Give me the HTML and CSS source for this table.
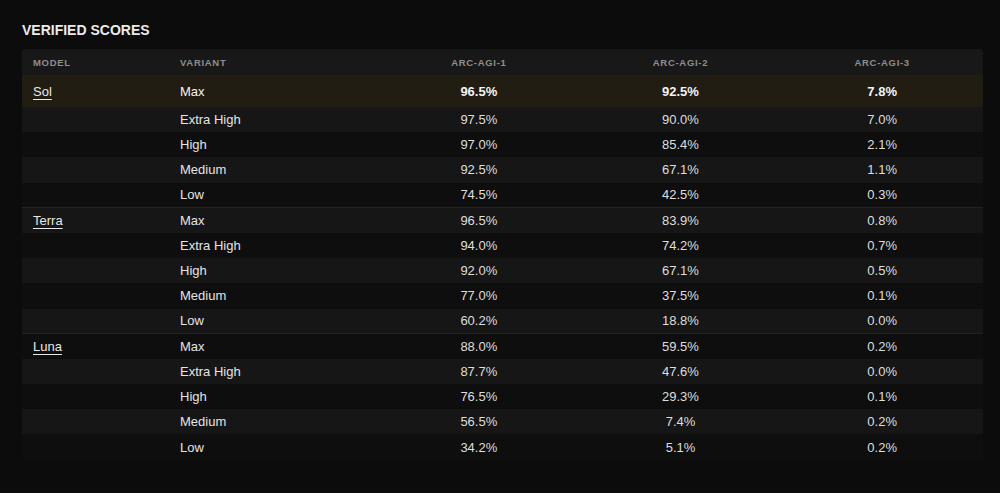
FILE: index.html
```html
<!DOCTYPE html>
<html lang="en">
<head>
<meta charset="utf-8">
<title>Verified Scores</title>
<link rel="stylesheet" href="styles.css">
</head>
<body>
<main class="page">
  <h2 class="title">VERIFIED SCORES</h2>
  <div class="table-wrap">
    <table class="scores">
      <colgroup>
        <col class="c-model"><col class="c-variant"><col class="c-num"><col class="c-num"><col class="c-num">
      </colgroup>
      <thead>
        <tr><th class="left">Model</th><th class="left">Variant</th><th>ARC-AGI-1</th><th>ARC-AGI-2</th><th>ARC-AGI-3</th></tr>
      </thead>
      <tbody>
        <tr class="best group-start"><td class="model"><a href="#">Sol</a></td><td class="variant">Max</td><td>96.5%</td><td>92.5%</td><td>7.8%</td></tr>
        <tr class="light"><td></td><td class="variant">Extra High</td><td>97.5%</td><td>90.0%</td><td>7.0%</td></tr>
        <tr class="dark"><td></td><td class="variant">High</td><td>97.0%</td><td>85.4%</td><td>2.1%</td></tr>
        <tr class="light"><td></td><td class="variant">Medium</td><td>92.5%</td><td>67.1%</td><td>1.1%</td></tr>
        <tr class="dark"><td></td><td class="variant">Low</td><td>74.5%</td><td>42.5%</td><td>0.3%</td></tr>

        <tr class="light group-start"><td class="model"><a href="#">Terra</a></td><td class="variant">Max</td><td>96.5%</td><td>83.9%</td><td>0.8%</td></tr>
        <tr class="dark"><td></td><td class="variant">Extra High</td><td>94.0%</td><td>74.2%</td><td>0.7%</td></tr>
        <tr class="light"><td></td><td class="variant">High</td><td>92.0%</td><td>67.1%</td><td>0.5%</td></tr>
        <tr class="dark"><td></td><td class="variant">Medium</td><td>77.0%</td><td>37.5%</td><td>0.1%</td></tr>
        <tr class="light"><td></td><td class="variant">Low</td><td>60.2%</td><td>18.8%</td><td>0.0%</td></tr>

        <tr class="dark group-start"><td class="model"><a href="#">Luna</a></td><td class="variant">Max</td><td>88.0%</td><td>59.5%</td><td>0.2%</td></tr>
        <tr class="light"><td></td><td class="variant">Extra High</td><td>87.7%</td><td>47.6%</td><td>0.0%</td></tr>
        <tr class="dark"><td></td><td class="variant">High</td><td>76.5%</td><td>29.3%</td><td>0.1%</td></tr>
        <tr class="light"><td></td><td class="variant">Medium</td><td>56.5%</td><td>7.4%</td><td>0.2%</td></tr>
        <tr class="dark"><td></td><td class="variant">Low</td><td>34.2%</td><td>5.1%</td><td>0.2%</td></tr>
      </tbody>
    </table>
  </div>
</main>
</body>
</html>
```

FILE: styles.css
```css
* { box-sizing: border-box; }

html, body {
  margin: 0;
  background: #0d0c0d;
}

body {
  font-family: "Liberation Sans", Arial, sans-serif;
  color: #e2e2e2;
}

.page {
  padding: 22px 17px 0 22px;
}

.title {
  margin: 0;
  font-size: 14px;
  line-height: 16px;
  font-weight: 700;
  letter-spacing: 0;
  color: #ebebeb;
}

.table-wrap {
  margin-top: 11px;
  width: 961px;
  border-radius: 4px;
  overflow: hidden;
  background: #141314;
}

.scores {
  width: 100%;
  border-collapse: collapse;
  table-layout: fixed;
}

.c-model { width: 147px; }
.c-variant { width: 209px; }

.scores th {
  height: 26px;
  padding: 0;
  font-size: 9.5px;
  font-weight: 700;
  letter-spacing: 0.7px;
  text-transform: uppercase;
  color: #8f8e8e;
  text-align: center;
  background: #191818;
  vertical-align: middle;
}

.scores th.left { text-align: left; padding-left: 11px; }

.scores td {
  height: 25.2px;
  padding: 0;
  font-size: 13px;
  color: #dedede;
  text-align: center;
  vertical-align: middle;
}

.scores td:first-child { padding-left: 11px; text-align: left; }
.scores td.variant { text-align: left; padding-left: 11px; color: #e4e4e4; }

.scores td.model a {
  color: #e8e8e8;
  text-decoration: underline;
  text-underline-offset: 3px;
  text-decoration-thickness: 1px;
}

.scores tr.light td { background: #171616; }
.scores tr.dark td { background: #0f0e0f; }

.scores tr.group-start td { border-top: 1px solid #242323; }

.scores tr.best td {
  height: 32px;
  background: #221d13;
  color: #f4f4f4;
  font-weight: 700;
  border-top: none;
}

.scores tr.best td.variant { font-weight: 400; }
.scores tr.best td.model a { font-weight: 400; }
```
